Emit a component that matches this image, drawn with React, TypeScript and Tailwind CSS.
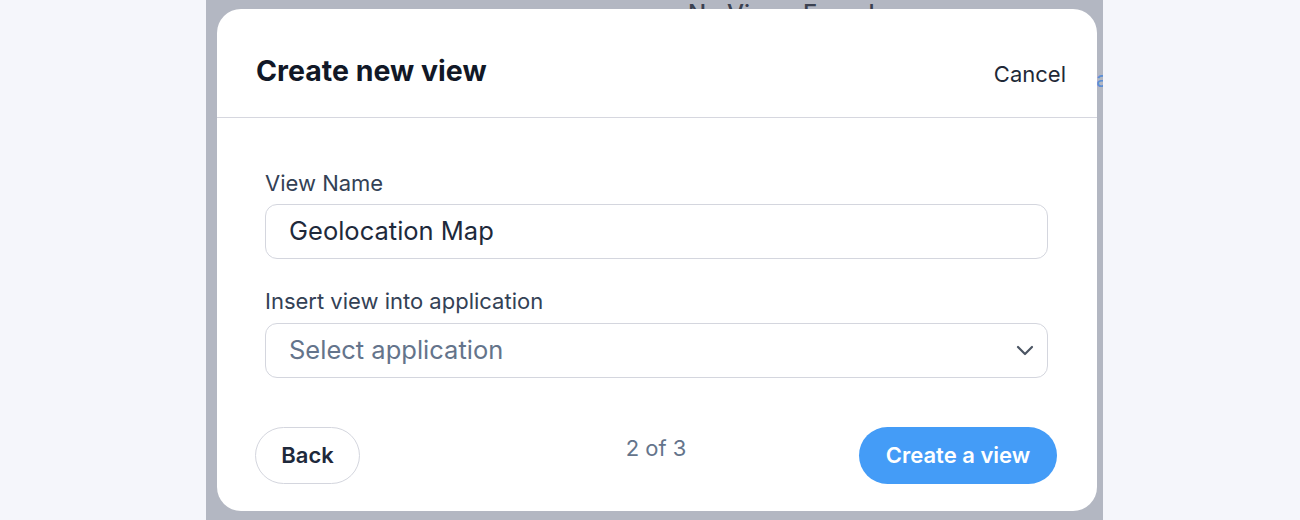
// ─── Field ────────────────────────────────────────────────────────────────────

function FieldLabel({ children }: { children: React.ReactNode }) {
  return <label className="block text-[22px] leading-[28px] text-[#334155]">{children}</label>;
}

function Chevron() {
  return (
    <svg width="18" height="11" viewBox="0 0 18 11" fill="none" className="text-[#4b5563]">
      <path d="M2 2l7 7 7-7" stroke="currentColor" strokeWidth="2.2" strokeLinecap="round" strokeLinejoin="round" />
    </svg>
  );
}

// ─── App ──────────────────────────────────────────────────────────────────────

export default function App() {
  return (
    <div className="flex h-[520px] w-[1300px] bg-[#f5f6fb] font-['Inter',sans-serif]">
      <div className="ml-[206px] h-full w-[897px]">
        {/* Backdrop with page content behind */}
        <div className="relative h-full w-full overflow-hidden bg-[#b3b7c2]">
          <span className="absolute left-[482px] top-[2px] text-[24px] font-medium leading-none text-[#3b4150]">No Views Found</span>
          <span className="absolute left-[890px] top-[64px] text-[21px] text-[#5d8fd6]">a</span>

          {/* Modal */}
          <div className="absolute left-[11px] top-[9px] flex h-[502px] w-[880px] flex-col rounded-[24px] bg-white">
            {/* Header */}
            <div className="flex h-[109px] items-start justify-between border-b border-[#d6d7df] pl-[39px] pr-[31px] pt-[44px]">
              <h2 className="text-[28.5px] font-bold leading-[36px] text-[#111827]">Create new view</h2>
              <button className="mt-[7px] text-[22px] leading-[28px] text-[#1f2937]">Cancel</button>
            </div>

            {/* Body */}
            <div className="flex flex-col pl-[48px] pr-[49px] pt-[51px]">
              <FieldLabel>View Name</FieldLabel>
              <div className="mt-[7px] flex h-[55px] items-center rounded-[12px] border border-[#d4d6de] px-[23px] text-[25.5px] text-[#1e293b]">
                Geolocation Map
              </div>

              <div className="mt-[28px]">
                <FieldLabel>Insert view into application</FieldLabel>
              </div>
              <div className="mt-[8px] flex h-[55px] items-center justify-between rounded-[12px] border border-[#d4d6de] pl-[23px] pr-[13px] text-[25.5px] text-[#64748b]">
                <span>Select application</span>
                <Chevron />
              </div>
            </div>

            {/* Footer */}
            <div className="mt-[49px] grid grid-cols-3 items-start pl-[38px] pr-[40px]">
              <div>
                <button className="h-[57px] w-[105px] rounded-full border border-[#d4d6de] text-[22px] font-semibold text-[#1e293b]">
                  Back
                </button>
              </div>
              <div className="pt-[5px] text-center text-[22px] text-[#64748b]">2 of 3</div>
              <div className="flex justify-end">
                <button className="h-[57px] w-[198px] rounded-full bg-[#449cf7] text-[22px] font-semibold text-white">
                  Create a view
                </button>
              </div>
            </div>
          </div>
        </div>
      </div>
    </div>
  );
}
